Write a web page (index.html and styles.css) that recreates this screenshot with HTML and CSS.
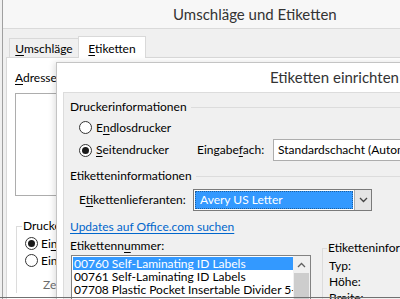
FILE: index.html
```html
<!DOCTYPE html>
<html lang="de">
<head>
  <meta charset="UTF-8" />
  <meta name="viewport" content="width=device-width, initial-scale=1.0"/>
  <title>Umschläge und Etiketten</title>
  <link rel="stylesheet" href="styles.css">
</head>
<body>

  <div class="dialog">
    <div class="titlebar">Umschläge und Etiketten</div>

    <div class="tabs">
      <div class="tab"><u>U</u>mschläge</div>
      <div class="tab active"><u>E</u>tiketten</div>
    </div>

    <div class="panel">
      <div class="label"><u>A</u>dresse:</div>
      <div class="address"></div>

      <fieldset class="print-group">
        <legend>Drucken</legend>
        <div class="radio-row"><span class="radio checked"></span>Ei<u>n</u>e ganze Seite</div>
        <div class="radio-row"><span class="radio"></span>Ein Etikett</div>
        <div class="sub">Zeile: 1</div>
      </fieldset>
    </div>
  </div>

  <div class="setup">
    <div class="setup-title">Etiketten einrichten</div>

    <div class="setup-body">
      <div class="printer-group">
        <div class="section">Druckerinformationen</div>

        <div class="radio-row printer-row"><span class="radio"></span>E<u>n</u>dlosdrucker</div>
        <div class="radio-row printer-row tray-row">
          <span class="radio checked"></span>
          <span class="tray-name"><u>S</u>eitendrucker</span>
          <span class="tray-label">Eingabe<u>f</u>ach:</span>
          <div class="select">Standardschacht (Automatisch)</div>
        </div>
      </div>

      <div class="section">Etiketteninformationen</div>

      <div class="vendor-row">
        <span class="vendor-label">E<u>t</u>ikettenlieferanten:</span>
        <div class="combo">
          <span class="combo-value">Avery US Letter</span>
          <span class="combo-btn">
            <svg width="9" height="6" viewBox="0 0 9 6"><polyline points="1,1 4.5,4.5 8,1" fill="none" stroke="#444" stroke-width="1.3"/></svg>
          </span>
        </div>
      </div>

      <a class="link" href="#">Updates auf Office.com suchen</a>

      <div class="lower">
        <div class="numbers">
          <div>Etikettenn<u>u</u>mmer:</div>
          <div class="list">
            <ul>
              <li class="selected">00760 Self-Laminating ID Labels</li>
              <li>00761 Self-Laminating ID Labels</li>
              <li>07708 Plastic Pocket Insertable Divider 5-Tab</li>
            </ul>
            <div class="scrollbar">
              <span class="scroll-up">
                <svg width="9" height="6" viewBox="0 0 9 6"><polyline points="1,5 4.5,1.5 8,5" fill="none" stroke="#606060" stroke-width="1.3"/></svg>
              </span>
              <span class="thumb"></span>
            </div>
          </div>
        </div>

        <fieldset class="info-group">
          <legend>Etiketteninformationen</legend>
          <div class="info-row">Typ:</div>
          <div class="info-row">Höhe:</div>
          <div class="info-row">Breite:</div>
        </fieldset>
      </div>
    </div>
  </div>

</body>
</html>
```

FILE: styles.css
```css
* {
  box-sizing: border-box;
}

html, body {
  margin: 0;
  width: 400px;
  height: 299px;
  overflow: hidden;
}

body {
  position: relative;
  font-family: Lato, "Noto Sans", sans-serif;
  font-size: 12px;
  line-height: 16px;
  color: #000;
  background: #f0f0f0;
}

/* bottom edge of the captured window */
body::after {
  content: "";
  position: absolute;
  left: 0;
  right: 0;
  top: 297px;
  height: 1px;
  background: #707070;
}

u {
  text-decoration-thickness: 1px;
  text-underline-offset: 2px;
}

/* outer dialog: Umschläge und Etiketten */
.dialog {
  height: 299px;
  margin-left: 2px;
  border-left: 1px solid #a0a0a0;
  display: flex;
  flex-direction: column;
}

.titlebar {
  height: 29px;
  padding-left: 170px;
  border-bottom: 1px solid #dadada;
  background: #f7f7f7;
  color: #333;
  font-size: 15px;
  line-height: 28px;
}

.tabs {
  height: 28px;
  padding-left: 6px;
  display: flex;
  align-items: flex-end;
}

.tab {
  width: 70px;
  height: 19px;
  padding-top: 2px;
  border: 1px solid #d9d9d9;
  border-bottom: none;
  text-align: center;
}

.tab.active {
  position: relative;
  width: 68px;
  height: 22px;
  margin-left: -1px;
  margin-bottom: -1px;
  padding-top: 4px;
  background: #fff;
}

.panel {
  flex: 1;
  margin-left: 3px;
  padding: 12px 0 0 8px;
  border-top: 1px solid #d9d9d9;
  border-left: 1px solid #d9d9d9;
  background: #fff;
}

.address {
  width: 300px;
  height: 103px;
  margin-top: 7px;
  border: 1px solid #adadad;
  background: #fff;
}

fieldset {
  margin: 0;
  border: 1px solid #dcdcdc;
}

legend {
  padding: 0 1px;
  line-height: 16px;
}

.print-group {
  width: 300px;
  margin: 22px 0 0 1px;
  padding: 1px 0 0 5px;
  border-right: none;
  border-bottom: none;
}

.radio-row {
  height: 17px;
  display: flex;
  align-items: center;
  white-space: nowrap;
}

.radio {
  width: 13px;
  height: 13px;
  margin: 0 3px 0 3px;
  border: 1px solid #333;
  border-radius: 50%;
  background: #fff;
  display: flex;
  align-items: center;
  justify-content: center;
  flex-shrink: 0;
}

.radio.checked::after {
  content: "";
  width: 7px;
  height: 7px;
  border-radius: 50%;
  background: #1a1a1a;
}

.sub {
  margin: 8px 0 0 21px;
  color: #6d6d6d;
}

/* overlay dialog: Etiketten einrichten */
.setup {
  position: absolute;
  left: 56px;
  top: 62px;
  width: 380px;
  height: 260px;
  border: 1px solid #c4c4c4;
  background: #fff;
  box-shadow: -2px 0 6px rgba(0, 0, 0, 0.12);
  display: flex;
  flex-direction: column;
}

.setup-title {
  height: 29px;
  padding-left: 213px;
  color: #333;
  font-size: 15px;
  line-height: 29px;
  white-space: nowrap;
}

.setup-body {
  flex: 1;
  margin-left: 6px;
  padding: 6px 0 0 6px;
  border-top: 1px solid #dcdcdc;
  border-left: 1px solid #dcdcdc;
  background: #f0f0f0;
}

.printer-group {
  width: 333px;
  padding-bottom: 7px;
  border-right: 1px solid #dcdcdc;
  overflow: hidden;
}

.section {
  display: flex;
  align-items: center;
}

.section::after {
  content: "";
  flex: 1;
  margin-left: 4px;
  border-top: 1px solid #dcdcdc;
}

.printer-row {
  margin-top: 4px;
  padding-left: 9px;
}

.printer-row .radio {
  margin: 0 4px 0 0;
}

.tray-row {
  height: 22px;
  margin-top: 3px;
}

.tray-row > * {
  flex-shrink: 0;
}

.tray-name {
  width: 101px;
}

.tray-label {
  width: 76px;
}

.select {
  width: 200px;
  height: 22px;
  padding-left: 4px;
  border: 1px solid #adadad;
  background: #fff;
  line-height: 20px;
  white-space: nowrap;
}

.vendor-row {
  height: 22px;
  margin-top: 5px;
  padding-left: 9px;
  display: flex;
  align-items: center;
}

.vendor-label {
  width: 114px;
}

.combo {
  width: 179px;
  height: 22px;
  border: 1px solid #7a7a7a;
  background: #fff;
  display: flex;
}

.combo-value {
  flex: 1;
  margin: 1px;
  padding-left: 5px;
  background: #3399ff;
  color: #fff;
  outline: 1px dotted #1d5fa0;
  outline-offset: -1px;
  line-height: 18px;
}

.combo-btn {
  width: 17px;
  border-left: 1px solid #adadad;
  background: #e5e5e5;
  display: flex;
  align-items: center;
  justify-content: center;
}

.link {
  display: block;
  margin-top: 8px;
  color: #0066cc;
  text-decoration: underline;
  text-decoration-thickness: 1px;
  text-underline-offset: 2px;
}

.lower {
  margin-top: 3px;
  display: flex;
  align-items: flex-start;
}

.numbers {
  width: 241px;
}

.list {
  width: 240px;
  height: 60px;
  margin: 1px 0 0 1px;
  border: 1px solid #828282;
  background: #fff;
  display: flex;
}

.list ul {
  flex: 1;
  margin: 0;
  padding: 1px 0 0 1px;
  list-style: none;
  overflow: hidden;
  white-space: nowrap;
}

.list li {
  height: 13px;
  padding-left: 1px;
  line-height: 13px;
}

.list li.selected {
  background: #3399ff;
  color: #fff;
}

.scrollbar {
  width: 17px;
  padding: 0 1px;
  background: #f0f0f0;
  display: flex;
  flex-direction: column;
}

.scroll-up {
  height: 17px;
  display: flex;
  align-items: center;
  justify-content: center;
}

.thumb {
  flex: 1;
  background: #cdcdcd;
}

.info-group {
  width: 120px;
  height: 80px;
  margin: 2px 0 0 11px;
  padding: 2px 0 0 4px;
  border-right: none;
  border-bottom: none;
}

.info-row {
  margin-left: 2px;
}
```
